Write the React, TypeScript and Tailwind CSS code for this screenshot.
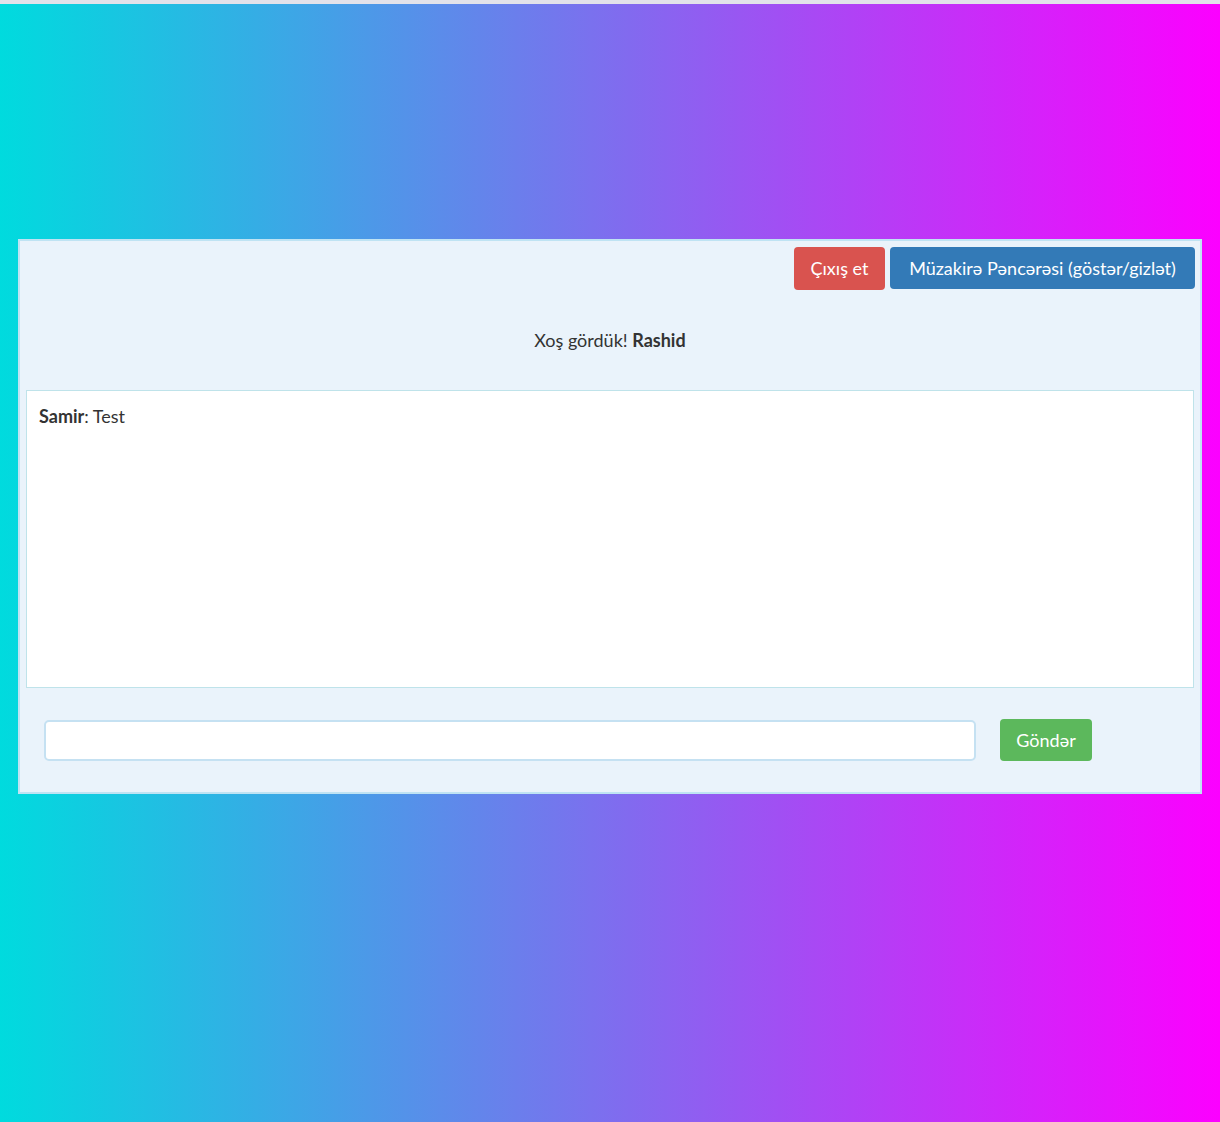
export default function App() {
  return (
    <div
      className="min-h-[1122px] w-full border-t-[4px] border-[#e2e2ea] bg-[linear-gradient(to_right,#00dbde,#fc00ff)] pt-[235px]"
      style={{ fontFamily: 'Lato, "Noto Sans", sans-serif' }}
    >
      <div className="mx-[18px] border-2 border-[#bfe3f3] bg-[#eaf3fb] pb-[31px]">
        <div className="flex justify-end gap-[5px] pr-[5px] pt-[6px]">
          <button className="h-[43px] w-[91px] rounded-[4px] bg-[#d9534f] text-[18px] text-white">
            Çıxış et
          </button>
          <button className="h-[42px] w-[305px] rounded-[4px] bg-[#337ab7] text-[18px] text-white">
            Müzakirə Pəncərəsi (göstər/gizlət)
          </button>
        </div>
        <p className="mt-[37px] text-center text-[18px] text-[#333]">
          Xoş gördük! <b className="font-bold">Rashid</b>
        </p>
        <div className="mx-[6px] mt-[36px] h-[298px] border border-[#bfe3ea] bg-white px-[12px] py-[12px] text-[18px] text-[#333]">
          <b className="font-bold">Samir</b>: Test
        </div>
        <div className="mt-[31px] flex items-center px-[24px]">
          <input className="h-[41px] w-[932px] rounded-[5px] border-2 border-[#c5e1f2] bg-white outline-none" />
          <button className="ml-[24px] h-[42px] w-[92px] rounded-[4px] bg-[#5cb85c] text-[18px] text-white">
            Göndər
          </button>
        </div>
      </div>
    </div>
  );
}
